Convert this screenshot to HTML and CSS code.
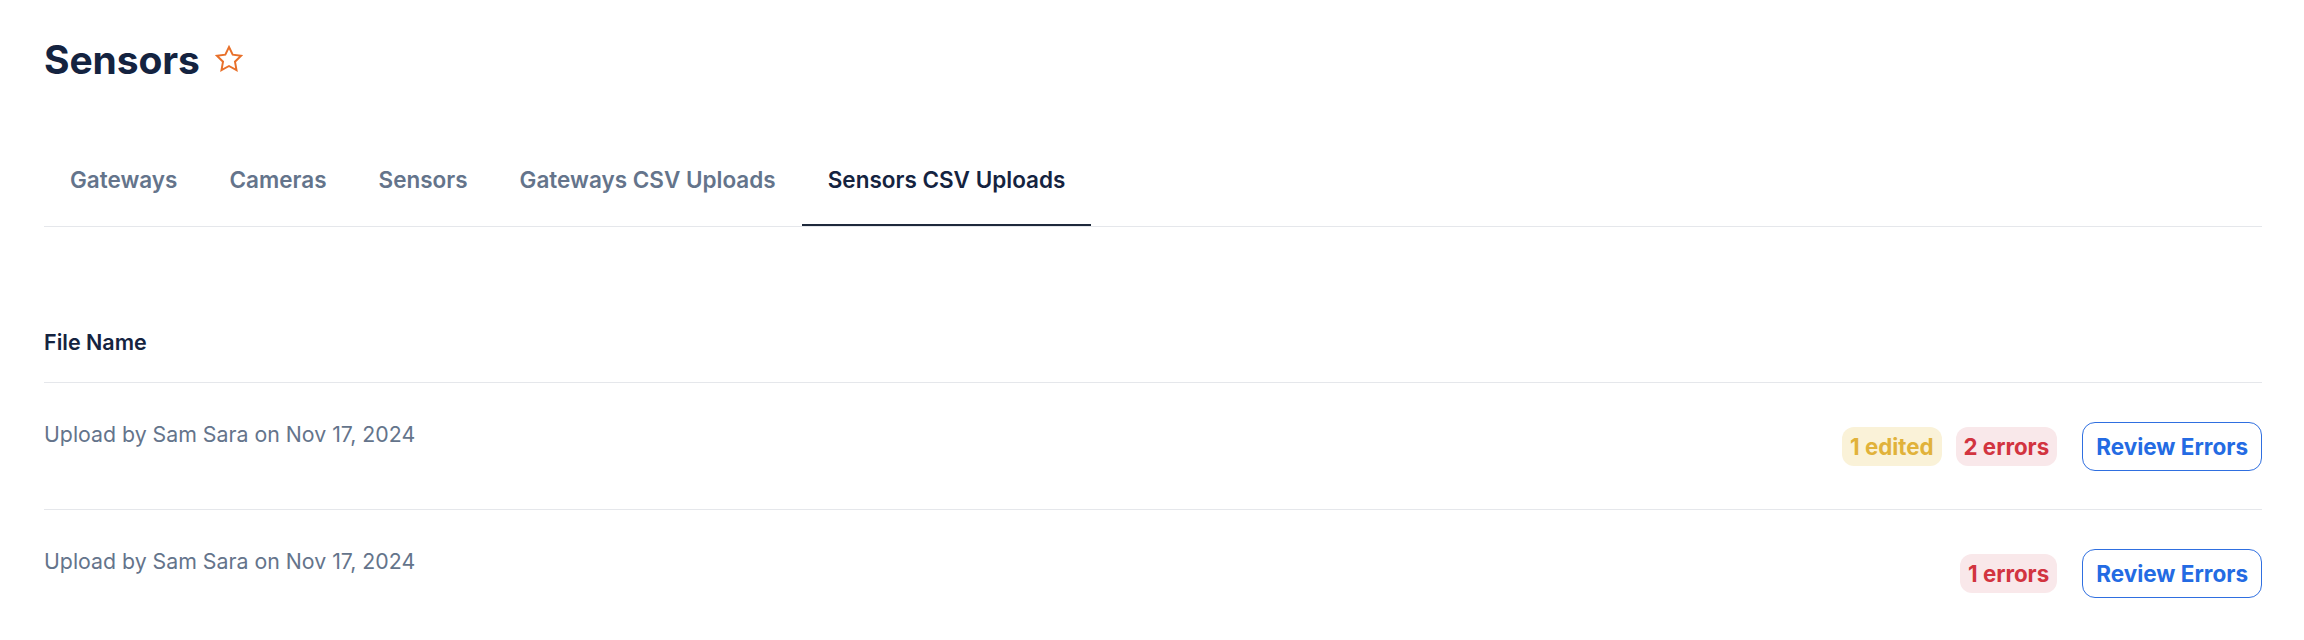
FILE: index.html
```html
<!DOCTYPE html>
<html lang="en">
<head>
<meta charset="utf-8">
<title>Sensors</title>
<link rel="stylesheet" href="styles.css">
</head>
<body>
<main class="page">
  <header class="title-row">
    <h1 class="title">Sensors</h1>
    <svg class="star" viewBox="1 1 22 22" width="28" height="28" aria-hidden="true">
      <polygon points="12,2.6 14.9,8.6 21.5,9.5 16.7,14.1 17.9,20.7 12,17.5 6.1,20.7 7.3,14.1 2.5,9.5 9.1,8.6" fill="none" stroke="#e8702a" stroke-width="1.55" stroke-linejoin="miter"/>
    </svg>
  </header>
  <nav class="tabs">
    <a class="tab">Gateways</a>
    <a class="tab">Cameras</a>
    <a class="tab">Sensors</a>
    <a class="tab">Gateways CSV Uploads</a>
    <a class="tab active">Sensors CSV Uploads</a>
  </nav>
  <section class="table">
    <div class="thead">File Name</div>
    <div class="row">
      <div class="name">Upload by Sam Sara on Nov 17, 2024</div>
      <div class="actions">
        <span class="badge edited">1 edited</span>
        <span class="badge errors">2 errors</span>
        <button class="review">Review Errors</button>
      </div>
    </div>
    <div class="row">
      <div class="name">Upload by Sam Sara on Nov 17, 2024</div>
      <div class="actions">
        <span class="badge errors">1 errors</span>
        <button class="review">Review Errors</button>
      </div>
    </div>
  </section>
</main>
</body>
</html>
```

FILE: styles.css
```css
* { box-sizing: border-box; }
html, body { margin: 0; padding: 0; background: #ffffff; }
body {
  font-family: Inter, "Noto Sans", "Liberation Sans", sans-serif;
  color: #142340;
}
.page {
  padding: 37px 42px 0 44px;
}
.title-row {
  display: flex;
  align-items: center;
  gap: 15px;
  height: 46px;
}
.title {
  margin: 0;
  font-size: 39px;
  line-height: 46px;
  font-weight: 700;
  color: #142340;
  letter-spacing: -0.1px;
}
.star { display: block; margin-top: -3px; }
.tabs {
  display: flex;
  margin-top: 48px;
  border-bottom: 1px solid #e5e7eb;
}
.tab {
  padding: 33px 26px 28px;
  font-size: 22.5px;
  line-height: 32px;
  font-weight: 600;
  color: #64748b;
  border-bottom: 2px solid transparent;
  cursor: pointer;
}
.tab.active {
  color: #142340;
  border-bottom-color: #1e293b;
}
.table { margin-top: 75px; }
.thead {
  padding: 25px 0;
  font-size: 21.5px;
  line-height: 30px;
  font-weight: 600;
  color: #142340;
  border-bottom: 1px solid #e5e7eb;
}
.row {
  display: flex;
  align-items: center;
  justify-content: space-between;
  min-height: 127px;
  border-bottom: 1px solid #e5e7eb;
}
.row:last-child { border-bottom: none; }
.name {
  align-self: flex-start;
  padding-top: 36px;
  font-size: 21.3px;
  line-height: 30px;
  font-weight: 400;
  color: #64748b;
}
.actions {
  display: flex;
  align-items: center;
}
.badge {
  display: inline-block;
  padding: 0 8px;
  height: 39px;
  line-height: 39px;
  border-radius: 12px;
  font-size: 22.3px;
  font-weight: 650;
  margin-left: 14px;
}
.badge.edited { background: #faf2d8; color: #e1b23a; }
.badge.errors { background: #f9e8ea; color: #d2343f; }
.review {
  margin-left: 25px;
  height: 49px;
  padding: 0 13px;
  background: #ffffff;
  border: 1.5px solid #2f6fe0;
  border-radius: 13px;
  font-family: inherit;
  font-size: 22.5px;
  font-weight: 650;
  color: #246be3;
  cursor: pointer;
}
```
